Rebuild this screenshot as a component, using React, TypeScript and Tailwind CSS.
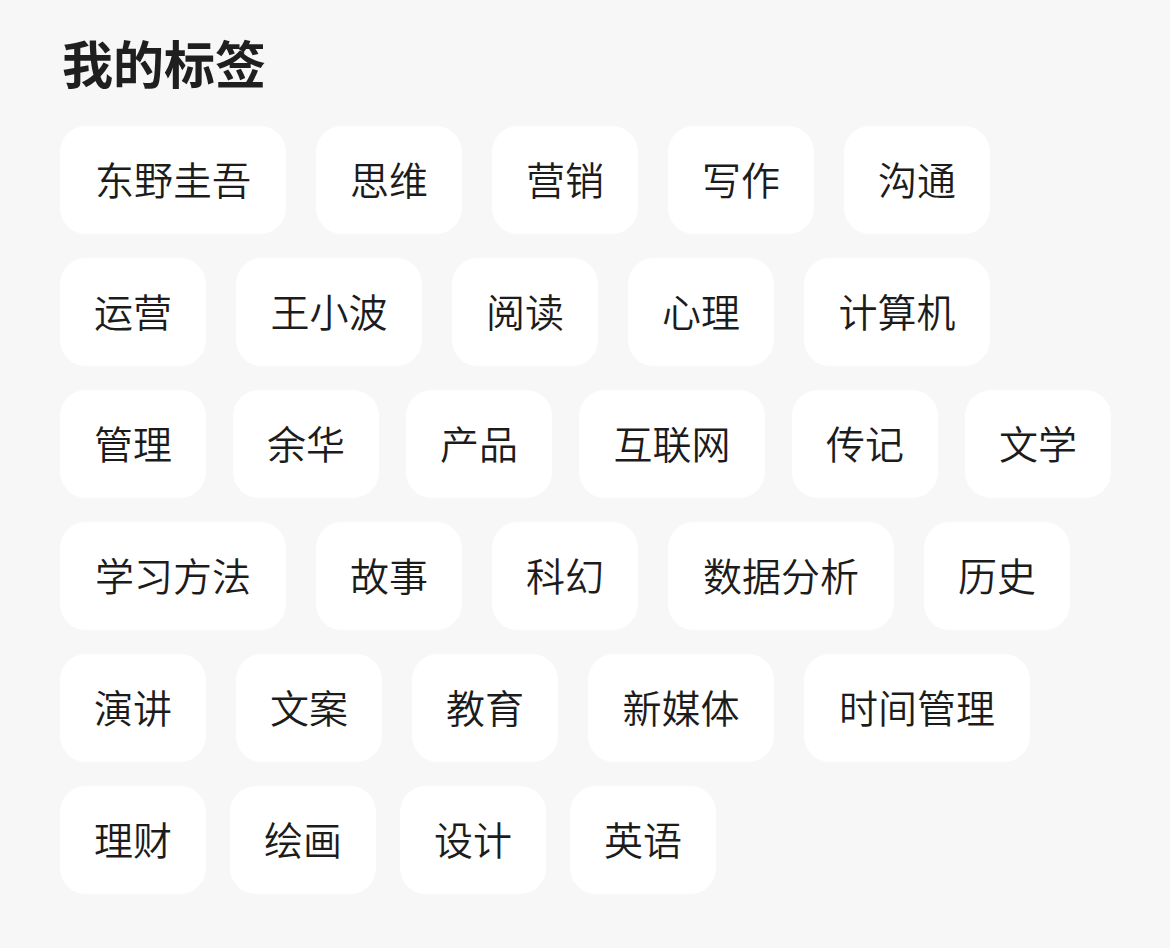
const rows: { gap: string; tags: string[] }[] = [
  { gap: 'gap-x-[30px]', tags: ['东野圭吾', '思维', '营销', '写作', '沟通'] },
  { gap: 'gap-x-[30px]', tags: ['运营', '王小波', '阅读', '心理', '计算机'] },
  { gap: 'gap-x-[27px]', tags: ['管理', '余华', '产品', '互联网', '传记', '文学'] },
  { gap: 'gap-x-[30px]', tags: ['学习方法', '故事', '科幻', '数据分析', '历史'] },
  { gap: 'gap-x-[30px]', tags: ['演讲', '文案', '教育', '新媒体', '时间管理'] },
  { gap: 'gap-x-[24px]', tags: ['理财', '绘画', '设计', '英语'] },
];

// tag width grows 40px per character
const widthFor = (t: string) =>
  t.length >= 4 ? 'w-[226px]' : t.length === 3 ? 'w-[186px]' : 'w-[146px]';

export default function App() {
  return (
    <div
      className="min-h-screen w-full bg-[#f7f7f7] pl-[60px] pt-[37px]"
      style={{ fontFamily: '"Noto Sans CJK SC", "Noto Sans", sans-serif' }}
    >
      <h1 className="text-[51px] font-bold leading-none text-[#1f1f1f] pl-[2px]">我的标签</h1>
      <div className="mt-[38px] flex flex-col gap-y-[24px]">
        {rows.map((row, i) => (
          <div key={i} className={`flex ${row.gap}`}>
            {row.tags.map((t) => (
              <div
                key={t}
                className={`${widthFor(t)} flex h-[108px] items-center justify-center rounded-[26px] bg-white pb-[4px] text-[39px] font-[350] leading-none text-[#1c1c1c]`}
              >
                {t}
              </div>
            ))}
          </div>
        ))}
      </div>
    </div>
  );
}
